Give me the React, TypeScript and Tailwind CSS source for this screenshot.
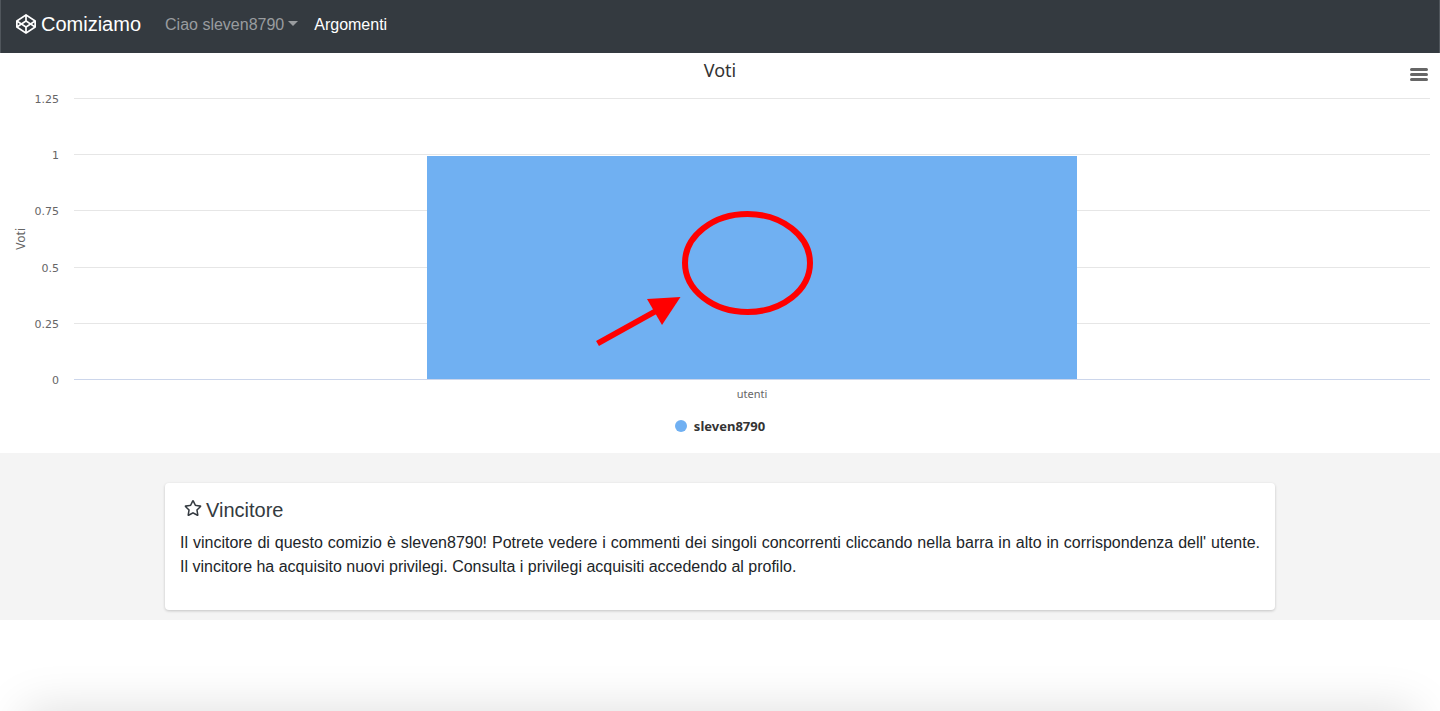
import { FaCodepen, FaRegStar } from "react-icons/fa";

const ticks = ["1.25", "1", "0.75", "0.5", "0.25"];

function Navbar() {
  return (
    <nav className="flex h-[53px] items-start border-x border-[#50565c] bg-[#343a40] px-[15px] pt-2">
      <a href="#" className="mr-6 flex items-center gap-[5px] text-xl leading-8 text-white">
        <FaCodepen className="size-5" />
        Comiziamo
      </a>
      <button type="button" className="mr-4 flex items-center gap-1 pt-px leading-8 text-[#999c9f]">
        Ciao sleven8790
        <span className="mb-1 border-x-[5px] border-t-[5px] border-x-transparent border-t-[#999c9f]" />
      </button>
      <a href="#argomenti" className="pt-px leading-8 text-white">
        Argomenti
      </a>
    </nav>
  );
}

function Annotation() {
  return (
    <svg
      className="absolute top-[112px] left-1/2 -ml-[156px]"
      width="218"
      height="140"
      viewBox="0 0 218 140"
      aria-hidden="true"
    >
      <ellipse cx="151.500" cy="53" rx="62.500" ry="49" fill="none" stroke="#f00" strokeWidth="6" />
      <path d="M1.500 133.500 L60 101" stroke="#f00" strokeWidth="6" />
      <path d="M51 89 L84.500 87 L66 115 Z" fill="#f00" />
    </svg>
  );
}

function Chart() {
  return (
    <section className="h-[400px] bg-white font-['Noto_Sans','Open_Sans',sans-serif]">
      <header className="grid h-[45px] grid-cols-[1fr_auto_1fr] items-start">
        <h2 className="col-start-2 pt-[5px] text-lg leading-6 text-[#333]">Voti</h2>
        <button
          type="button"
          aria-label="Chart menu"
          className="mt-[15px] mr-3 flex w-[18px] flex-col gap-0.5 justify-self-end"
        >
          <span className="h-[3px] w-full rounded-full bg-[#666]" />
          <span className="h-[3px] w-full rounded-full bg-[#666]" />
          <span className="h-[3px] w-full rounded-full bg-[#666]" />
        </button>
      </header>
      <div className="flex h-[282px] pr-2.5 text-[11px] text-[#666]">
        <div className="flex w-7 items-center justify-end pr-px">
          <span className="rotate-180 text-xs leading-3 [writing-mode:vertical-rl]">Voti</span>
        </div>
        <div className="flex w-[46px] flex-col pr-[15px] text-right font-['DejaVu_Sans',sans-serif]">
          {ticks.map((tick) => (
            <div key={tick} className="flex-1">
              <span className="-mt-1.5 block leading-4">{tick}</span>
            </div>
          ))}
          <div className="h-px">
            <span className="-mt-1.5 block leading-4">0</span>
          </div>
        </div>
        <div className="relative flex flex-1 flex-col">
          {ticks.map((tick) => (
            <div key={tick} className="flex-1 border-t border-[#e6e6e6]" />
          ))}
          <div className="h-px bg-[#ccd6eb]" />
          <div className="absolute bottom-px left-[26%] h-[224px] w-[48%] border-t border-white bg-[#70b0f2]" />
          <Annotation />
        </div>
      </div>
      <div className="pt-1.5 pr-2.5 pl-[74px] text-center text-[11px] leading-4 text-[#666]">utenti</div>
      <div className="mt-3.5 flex items-center justify-center gap-[7px] text-[13px] leading-5 font-bold text-[#333]">
        <span className="size-3 rounded-full bg-[#70b0f2]" />
        sleven8790
      </div>
    </section>
  );
}

function Winner() {
  return (
    <section className="bg-[#f4f4f4] px-4 pt-[30px] pb-2.5">
      <article className="mx-auto max-w-[1110px] rounded-sm bg-white px-[15px] pt-3 pb-[31px] shadow-[0_1px_3px_rgba(0,0,0,0.2)]">
        <h5 className="flex items-center gap-1 pl-1 text-xl leading-[30px] text-[#343a40]">
          <FaRegStar className="mb-1 size-[18px]" />
          Vincitore
        </h5>
        <p className="mt-1.5 text-justify leading-6">
          Il vincitore di questo comizio è sleven8790! Potrete vedere i commenti dei singoli concorrenti cliccando
          nella barra in alto in corrispondenza dell' utente. Il vincitore ha acquisito nuovi privilegi. Consulta i
          privilegi acquisiti accedendo al profilo.
        </p>
      </article>
    </section>
  );
}

export default function App() {
  return (
    <div className="flex min-h-screen flex-col bg-white font-['Liberation_Sans',Arial,sans-serif] text-base text-[#212529]">
      <Navbar />
      <main>
        <Chart />
        <Winner />
      </main>
      <div className="flex flex-1 items-end overflow-hidden px-16">
        <div className="h-0 w-full shadow-[0_38px_48px_40px_rgba(0,0,0,0.13)]" />
      </div>
    </div>
  );
}
